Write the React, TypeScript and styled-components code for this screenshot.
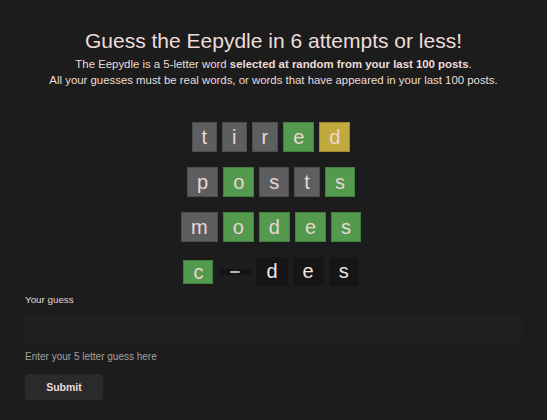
import React from "react";
import styled, { createGlobalStyle } from "styled-components";

const Global = createGlobalStyle`
  html, body { margin: 0; padding: 0; background: #1c1c1c; }
  body {
    font-family: "Liberation Sans", Arial, "Noto Sans", sans-serif;
    color: #ead9d7;
  }
  * { box-sizing: border-box; }
`;

const Page = styled.main`
  width: 547px;
  height: 420px;
  padding: 28px 25px 0;
  display: flex;
  flex-direction: column;
  background: #1c1c1c;
`;

const Header = styled.header`
  text-align: center;
`;

const Title = styled.h1`
  margin: 0;
  font-size: 21px;
  line-height: 26px;
  font-weight: 400;
  color: #ecdcda;
`;

const Sub = styled.p`
  margin: 2px 0 0;
  font-size: 11.4px;
  line-height: 16px;
  color: #ecdcda;
  b { font-weight: 700; }
`;

const Board = styled.section`
  margin-top: 34px;
  padding-right: 5px;
  display: flex;
  flex-direction: column;
  align-items: center;
  gap: 15px;
`;

const Row = styled.div`
  display: flex;
  align-items: center;
  justify-content: center;
  gap: 5px;
  min-height: 29px;
`;

type State = "absent" | "correct" | "present" | "empty" | "current";

const colors: Record<State, string> = {
  absent: "#5c5e60",
  correct: "#539a4f",
  present: "#c1a93d",
  empty: "#151515",
  current: "#539a4f",
};

const sizes: Record<State, number> = {
  absent: 30,
  correct: 30,
  present: 30,
  empty: 29,
  current: 24,
};

const Tile = styled.span<{ $s: State }>`
  display: inline-block;
  padding: 0 10px;
  height: ${(p) => sizes[p.$s]}px;
  line-height: ${(p) => sizes[p.$s]}px;
  font-size: 20px;
  color: ${(p) => (p.$s === "empty" ? "#f2e6e4" : "#ecd6d4")};
  background: ${(p) => colors[p.$s]};
  box-shadow: ${(p) =>
    p.$s === "empty" ? "none" : "inset 0 0 0 1px rgba(0,0,0,0.18)"};
`;

const DashTile = styled.span`
  display: inline-flex;
  align-items: center;
  justify-content: center;
  width: 33px;
  height: 6px;
  background: #141414;
  &::after {
    content: "";
    width: 10px;
    height: 2px;
    border-radius: 1px;
    background: #bdb3b1;
  }
`;

const Form = styled.form`
  margin-top: 8px;
  display: flex;
  flex-direction: column;
  align-items: flex-start;
`;

const Label = styled.label`
  font-size: 9.8px;
  line-height: 12px;
  color: #e4d6d4;
`;

const Input = styled.input`
  margin-top: 8px;
  width: 100%;
  height: 30px;
  border: none;
  border-radius: 4px;
  background: #1f1f1f;
  outline: none;
  color: #eee;
  padding: 0 8px;
`;

const Help = styled.p`
  margin: 7px 0 0;
  font-size: 10px;
  line-height: 12px;
  color: #a8a09f;
`;

const Button = styled.button`
  margin-top: 11px;
  width: 78px;
  height: 26px;
  border: none;
  border-radius: 4px;
  background: #2a2a2a;
  color: #ecdcda;
  font-family: "Liberation Sans", Arial, sans-serif;
  font-size: 10.5px;
  font-weight: 700;
`;

const rows: { l: string; s: State }[][] = [
  [
    { l: "t", s: "absent" },
    { l: "i", s: "absent" },
    { l: "r", s: "absent" },
    { l: "e", s: "correct" },
    { l: "d", s: "present" },
  ],
  [
    { l: "p", s: "absent" },
    { l: "o", s: "correct" },
    { l: "s", s: "absent" },
    { l: "t", s: "absent" },
    { l: "s", s: "correct" },
  ],
  [
    { l: "m", s: "absent" },
    { l: "o", s: "correct" },
    { l: "d", s: "correct" },
    { l: "e", s: "correct" },
    { l: "s", s: "correct" },
  ],
];

export default function App() {
  return (
    <>
      <Global />
      <Page>
        <Header>
          <Title>Guess the Eepydle in 6 attempts or less!</Title>
          <Sub>
            The Eepydle is a 5-letter word <b>selected at random from your last 100 posts</b>.
            <br />
            All your guesses must be real words, or words that have appeared in your last 100 posts.
          </Sub>
        </Header>
        <Board>
          {rows.map((r, i) => (
            <Row key={i}>
              {r.map((t, j) => (
                <Tile key={j} $s={t.s}>
                  {t.l}
                </Tile>
              ))}
            </Row>
          ))}
          <Row>
            <Tile $s="current">c</Tile>
            <DashTile />
            <Tile $s="empty">d</Tile>
            <Tile $s="empty">e</Tile>
            <Tile $s="empty">s</Tile>
          </Row>
        </Board>
        <Form onSubmit={(e) => e.preventDefault()}>
          <Label htmlFor="guess">Your guess</Label>
          <Input id="guess" />
          <Help>Enter your 5 letter guess here</Help>
          <Button type="submit">Submit</Button>
        </Form>
      </Page>
    </>
  );
}
